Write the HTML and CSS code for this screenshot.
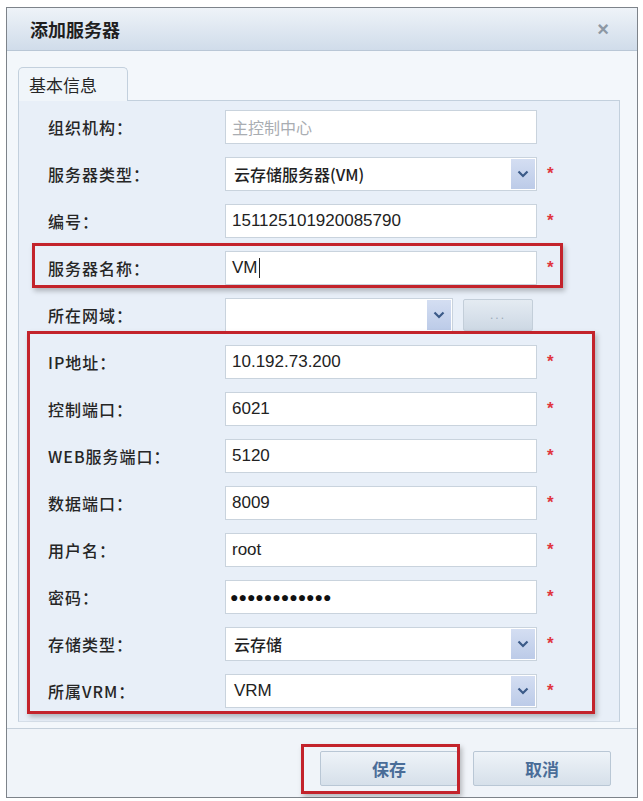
FILE: index.html
```html
<!DOCTYPE html>
<html lang="zh-CN">
<head>
    <meta charset="UTF-8">
    <meta name="viewport" content="width=device-width, initial-scale=1.0">
    <title>添加服务器</title>
    <link rel="stylesheet" href="styles.css">
</head>
<body>

    <div class="dialog">
        <!-- Title Bar -->
        <div class="dialog-header">
            <h2>添加服务器</h2>
            <span class="close">×</span>
        </div>

        <div class="dialog-body">
            <div class="tabs">
                <div class="tab active">基本信息</div>
            </div>

            <div class="tab-panel">
                <div class="row">
                    <label>组织机构：</label>
                    <input class="field" type="text" value="主控制中心" disabled>
                </div>

                <div class="row">
                    <label>服务器类型：</label>
                    <div class="field combo">
                        <span class="combo-text">云存储服务器(VM)</span>
                        <span class="combo-arrow"><svg viewBox="0 0 12 8" width="12" height="8"><path d="M1.5 1.5 L6 6 L10.5 1.5" fill="none" stroke="#3b5a88" stroke-width="2.2"/></svg></span>
                    </div>
                    <span class="req">*</span>
                </div>

                <div class="row">
                    <label>编号：</label>
                    <input class="field" type="text" value="151125101920085790">
                    <span class="req">*</span>
                </div>

                <div class="row marked">
                    <label>服务器名称：</label>
                    <div class="field text-field">VM<span class="caret"></span></div>
                    <span class="req">*</span>
                </div>

                <div class="row">
                    <label>所在网域：</label>
                    <div class="field combo short">
                        <span class="combo-text"></span>
                        <span class="combo-arrow"><svg viewBox="0 0 12 8" width="12" height="8"><path d="M1.5 1.5 L6 6 L10.5 1.5" fill="none" stroke="#3b5a88" stroke-width="2.2"/></svg></span>
                    </div>
                    <button type="button" class="more">...</button>
                </div>

                <!-- Connection settings -->
                <div class="group marked-group">
                    <div class="row">
                        <label>IP地址：</label>
                        <input class="field" type="text" value="10.192.73.200">
                        <span class="req">*</span>
                    </div>

                    <div class="row">
                        <label>控制端口：</label>
                        <input class="field" type="text" value="6021">
                        <span class="req">*</span>
                    </div>

                    <div class="row">
                        <label>WEB服务端口：</label>
                        <input class="field" type="text" value="5120">
                        <span class="req">*</span>
                    </div>

                    <div class="row">
                        <label>数据端口：</label>
                        <input class="field" type="text" value="8009">
                        <span class="req">*</span>
                    </div>

                    <div class="row">
                        <label>用户名：</label>
                        <input class="field" type="text" value="root">
                        <span class="req">*</span>
                    </div>

                    <div class="row">
                        <label>密码：</label>
                        <div class="field text-field dots">●●●●●●●●●●●●</div>
                        <span class="req">*</span>
                    </div>

                    <div class="row">
                        <label>存储类型：</label>
                        <div class="field combo">
                            <span class="combo-text">云存储</span>
                            <span class="combo-arrow"><svg viewBox="0 0 12 8" width="12" height="8"><path d="M1.5 1.5 L6 6 L10.5 1.5" fill="none" stroke="#3b5a88" stroke-width="2.2"/></svg></span>
                        </div>
                        <span class="req">*</span>
                    </div>

                    <div class="row">
                        <label>所属VRM：</label>
                        <div class="field combo">
                            <span class="combo-text latin">VRM</span>
                            <span class="combo-arrow"><svg viewBox="0 0 12 8" width="12" height="8"><path d="M1.5 1.5 L6 6 L10.5 1.5" fill="none" stroke="#3b5a88" stroke-width="2.2"/></svg></span>
                        </div>
                        <span class="req">*</span>
                    </div>
                </div>
            </div>
        </div>

        <!-- Buttons -->
        <div class="dialog-footer">
            <button type="button" class="btn marked-btn">保存</button>
            <button type="button" class="btn">取消</button>
        </div>
    </div>

</body>
</html>
```

FILE: styles.css
```css
* {
    margin: 0;
    padding: 0;
    box-sizing: border-box;
}

:root {
    --text-primary: #262626;
    --border-color: #c3d0dd;
    --panel-bg: #e8eff8;
    --mark-red: #c3232b;
    --req-red: #e0353f;
}

body {
    font-family: "Noto Sans CJK SC", "Liberation Sans", sans-serif;
    background: #ffffff;
    color: var(--text-primary);
    padding: 7px 5px 0 6px;
}

/* Dialog frame */
.dialog {
    width: 632px;
    height: 791px;
    border: 1px solid #7d838a;
    background: #f3f7fb;
    display: flex;
    flex-direction: column;
}

.dialog-header {
    height: 43px;
    display: flex;
    align-items: center;
    justify-content: space-between;
    padding: 0 28px 0 23px;
    background: linear-gradient(to bottom, #eef3f8, #d0dcea);
    border-bottom: 1px solid #b9c7d6;
}

.dialog-header h2 {
    font-size: 18px;
    font-weight: 700;
    color: #1f1f1f;
}

.close {
    font-family: "Liberation Sans", sans-serif;
    font-size: 20px;
    font-weight: 700;
    color: #8d98a4;
}

.dialog-body {
    padding: 16px 17px 0 11px;
}

/* Tabs */
.tabs {
    display: flex;
    margin-bottom: -1px;
}

.tab {
    width: 110px;
    height: 34px;
    padding: 4px 0 0 10px;
    font-size: 17px;
    background: #f0f5fa;
    border: 1px solid var(--border-color);
    border-bottom: none;
    border-radius: 5px 5px 0 0;
    position: relative;
    z-index: 1;
}

.tab-panel {
    height: 622px;
    padding: 2px 0 0 29px;
    background: var(--panel-bg);
    border: 1px solid var(--border-color);
    border-bottom-color: #d5dee8;
}

/* Form rows */
.row {
    height: 47px;
    display: flex;
    align-items: center;
    position: relative;
}

.row label {
    width: 177px;
    font-size: 16px;
    font-weight: 500;
    letter-spacing: 1px;
    color: #262626;
}

.field {
    width: 312px;
    height: 34px;
    padding: 0 6px;
    font-family: "Liberation Sans", "Noto Sans CJK SC", sans-serif;
    font-size: 17px;
    color: #222;
    background: #ffffff;
    border: 1px solid #c9d3dd;
    outline: none;
}

.field:disabled {
    color: #a9adb2;
    font-family: "Noto Sans CJK SC", sans-serif;
    font-size: 16px;
    background: #ffffff;
}

.text-field {
    display: flex;
    align-items: center;
}

.caret {
    width: 1px;
    height: 20px;
    margin-left: 1px;
    background: #222;
}

.dots {
    font-size: 14px;
    letter-spacing: 0;
    padding-left: 4px;
    color: #111;
}

.req {
    margin-left: 10px;
    font-family: "Liberation Sans", sans-serif;
    font-size: 17px;
    font-weight: 700;
    color: var(--req-red);
}

/* Combo boxes */
.combo {
    display: flex;
    align-items: center;
    justify-content: space-between;
    padding: 0 1px 0 8px;
}

.combo-text {
    font-family: "Noto Sans CJK SC", "Liberation Sans", sans-serif;
    font-size: 16px;
    font-weight: 500;
}

.combo-text.latin {
    font-family: "Liberation Sans", sans-serif;
    font-size: 17px;
    font-weight: 400;
}

.combo-arrow {
    width: 24px;
    height: 30px;
    display: flex;
    align-items: center;
    justify-content: center;
    background: linear-gradient(to bottom, #d4def2, #bccbe8);
}

.combo.short {
    width: 228px;
}

.more {
    width: 70px;
    height: 32px;
    margin-left: 10px;
    font-family: "Liberation Sans", sans-serif;
    font-size: 12px;
    letter-spacing: 2px;
    color: #9aa9b8;
    background: linear-gradient(to bottom, #e4ebf2, #cdd8e4);
    border: 1px solid #c3ced9;
    border-radius: 2px;
}

/* Red markers drawn over the important fields */
.marked::after,
.marked-group::after,
.marked-btn::after {
    content: "";
    position: absolute;
    border: 3px solid var(--mark-red);
    box-shadow: 2px 3px 5px rgba(0, 0, 0, 0.25);
    pointer-events: none;
}

.marked::after {
    top: -1px;
    bottom: 3px;
    left: -16px;
    width: 525px;
}

.group {
    position: relative;
}

.marked-group::after {
    top: -7px;
    bottom: 0;
    left: -21px;
    width: 562px;
}

/* Footer */
.dialog-footer {
    flex: 1;
    display: flex;
    justify-content: flex-end;
    align-items: flex-start;
    gap: 15px;
    padding: 22px 26px 0 0;
    margin-top: 6px;
    border-top: 1px solid #c5d0db;
    background: #f0f4f9;
}

.btn {
    width: 138px;
    height: 35px;
    font-family: "Noto Sans CJK SC", sans-serif;
    font-size: 17px;
    font-weight: 700;
    color: #4a6d98;
    background: linear-gradient(to bottom, #eef3f8, #d6e0ea);
    border: 1px solid #b9c7d5;
    border-radius: 2px;
    position: relative;
}

.marked-btn::after {
    top: -8px;
    bottom: -9px;
    left: -20px;
    right: -3px;
}
```
